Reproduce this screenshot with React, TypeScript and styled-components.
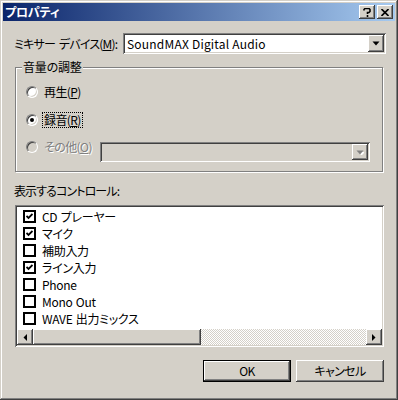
import React from 'react';
import styled, { createGlobalStyle, css } from 'styled-components';

const GlobalStyle = createGlobalStyle`
  html, body {
    margin: 0;
    padding: 0;
    background: #d4d0c8;
  }
  body {
    font-family: "Noto Sans CJK JP", "Liberation Sans", sans-serif;
    font-size: 12px;
    color: #000;
    font-feature-settings: "palt";
    letter-spacing: -0.6px;
  }
`;

const raised = css`
  background: #d4d0c8;
  box-shadow: inset -1px -1px #404040, inset 1px 1px #ffffff, inset -2px -2px #808080, inset 2px 2px #d4d0c8;
`;

const sunken = css`
  box-shadow: inset 1px 1px #808080, inset -1px -1px #ffffff, inset 2px 2px #404040, inset -2px -2px #d4d0c8;
`;

const Window = styled.div`
  width: 398px;
  height: 400px;
  box-sizing: border-box;
  padding: 3px;
  background: #d4d0c8;
  box-shadow: inset -1px -1px #404040, inset 1px 1px #d4d0c8, inset -2px -2px #808080, inset 2px 2px #ffffff;
  display: flex;
  flex-direction: column;
`;

const TitleBar = styled.div`
  height: 18px;
  flex: none;
  display: flex;
  align-items: center;
  padding: 0 2px 0 2px;
  background: linear-gradient(to right, #0a246a, #a6caf0);
`;

const Title = styled.span`
  flex: 1;
  color: #fff;
  font-weight: bold;
  font-size: 12px;
  line-height: 18px;
  letter-spacing: -0.2px;
`;

const CaptionButton = styled.div<{ $gap?: number }>`
  ${raised};
  width: 16px;
  height: 14px;
  margin-left: ${p => p.$gap ?? 0}px;
  display: flex;
  align-items: center;
  justify-content: center;
`;

const Body = styled.div`
  flex: 1;
  display: flex;
  flex-direction: column;
  padding: 12px 9px 0 11px;
`;

const Row = styled.div`
  display: flex;
  align-items: center;
  height: 21px;
`;

const FieldLabel = styled.span`
  width: 109px;
  flex: none;
  line-height: 14px;
  white-space: nowrap;
  letter-spacing: -0.8px;
  word-spacing: 2px;
`;

const Combo = styled.div<{ $width: number; $height: number; $disabled?: boolean }>`
  ${sunken};
  position: relative;
  box-sizing: border-box;
  width: ${p => p.$width}px;
  height: ${p => p.$height}px;
  background: ${p => (p.$disabled ? '#d4d0c8' : '#fff')};
  display: flex;
  align-items: center;
  padding: 2px;
`;

const ComboText = styled.span`
  flex: 1;
  padding-left: 2px;
  line-height: 14px;
  letter-spacing: 0.2px;
`;

const DropButton = styled.div`
  ${raised};
  width: 16px;
  height: 100%;
  display: flex;
  align-items: center;
  justify-content: center;
`;

const Mnemonic = styled.span`
  text-decoration: underline;
  text-underline-offset: 1px;
`;

const GroupBox = styled.div`
  position: relative;
  box-sizing: border-box;
  margin: 13px 0 0 1px;
  width: 368px;
  height: 105px;
  border: 1px solid #808080;
  box-shadow: inset 1px 1px #fff, 1px 1px #fff;
  padding: 17px 0 0 10px;
  display: flex;
  flex-direction: column;
`;

const Legend = styled.span`
  position: absolute;
  top: -8px;
  left: 6px;
  padding: 0 1px;
  line-height: 14px;
  letter-spacing: -0.2px;
  background: #d4d0c8;
`;

const RadioRow = styled.div<{ $top: number }>`
  display: flex;
  align-items: flex-start;
  margin-top: ${p => p.$top}px;
`;

const RadioItem = styled.div<{ $width?: number }>`
  display: flex;
  align-items: center;
  height: 14px;
  width: ${p => (p.$width ? `${p.$width}px` : 'auto')};
  flex: none;
`;

const RadioCircle = styled.span<{ $disabled?: boolean }>`
  position: relative;
  box-sizing: border-box;
  width: 12px;
  height: 12px;
  border-radius: 50%;
  border: 1px solid;
  border-color: #808080 #fff #fff #808080;
  background: ${p => (p.$disabled ? '#d4d0c8' : '#fff')};
  box-shadow: inset 1px 1px #404040, inset -1px -1px #d4d0c8;
  margin-right: 6px;
  flex: none;
`;

const RadioDot = styled.span`
  position: absolute;
  left: 3px;
  top: 3px;
  width: 4px;
  height: 4px;
  border-radius: 50%;
  background: #000;
`;

const RadioLabel = styled.span<{ $disabled?: boolean; $focused?: boolean }>`
  line-height: 14px;
  padding: 0 1px;
  white-space: nowrap;
  color: ${p => (p.$disabled ? '#808080' : '#000')};
  text-shadow: ${p => (p.$disabled ? '1px 1px #fff' : 'none')};
  outline: ${p => (p.$focused ? '1px dotted #000' : 'none')};
  margin-left: -1px;
`;

const SectionLabel = styled.div`
  margin-top: 12px;
  line-height: 14px;
  letter-spacing: -0.9px;
`;

const ListBox = styled.div`
  ${sunken};
  box-sizing: border-box;
  margin: 7px 0 0 1px;
  width: 369px;
  height: 142px;
  background: #fff;
  padding: 2px;
  display: flex;
  flex-direction: column;
`;

const Items = styled.div`
  flex: 1;
  padding: 1px 0 0 6px;
`;

const Item = styled.div`
  display: flex;
  align-items: center;
  height: 17px;
`;

const CheckBox = styled.span`
  box-sizing: border-box;
  width: 13px;
  height: 13px;
  border: 2px solid #000;
  margin-right: 6px;
  display: flex;
  align-items: center;
  justify-content: center;
  flex: none;
`;

const ItemText = styled.span`
  line-height: 14px;
  letter-spacing: -0.3px;
  word-spacing: 1px;
`;

const HScroll = styled.div`
  display: flex;
  height: 16px;
  flex: none;
`;

const ScrollButton = styled.div`
  ${raised};
  width: 16px;
  height: 16px;
  display: flex;
  align-items: center;
  justify-content: center;
`;

const Thumb = styled.div`
  ${raised};
  width: 168px;
  height: 16px;
`;

const Track = styled.div`
  flex: 1;
  background: repeating-conic-gradient(#fff 0 25%, #d4d0c8 0 50%) 0 0 / 2px 2px;
`;

const ButtonRow = styled.div`
  display: flex;
  justify-content: flex-end;
  gap: 5px;
  margin: 13px 2px 0 0;
`;

const PushButton = styled.div<{ $default?: boolean }>`
  ${raised};
  box-sizing: border-box;
  width: 88px;
  height: 22px;
  display: flex;
  align-items: center;
  justify-content: center;
  line-height: 14px;
  ${p =>
    p.$default &&
    css`
      box-shadow: inset 0 0 0 1px #000, inset -2px -2px #404040, inset 2px 2px #ffffff, inset -3px -3px #808080;
    `}
`;

const DownArrow = ({ color = '#000', shadow = false }: { color?: string; shadow?: boolean }) => (
  <svg width="8" height="5" viewBox="0 0 8 5">
    {shadow && <path d="M2 2h7l-3.5 3.5z" fill="#fff" />}
    <path d="M0.5 0.5h7L4 4.5z" fill={color} />
  </svg>
);

const items: { label: string; checked: boolean }[] = [
  { label: 'CD プレーヤー', checked: true },
  { label: 'マイク', checked: true },
  { label: '補助入力', checked: false },
  { label: 'ライン入力', checked: true },
  { label: 'Phone', checked: false },
  { label: 'Mono Out', checked: false },
  { label: 'WAVE 出力ミックス', checked: false },
];

export default function App() {
  return (
    <>
      <GlobalStyle />
      <Window>
        <TitleBar>
          <Title>プロパティ</Title>
          <CaptionButton>
            <svg width="8" height="9" viewBox="0 0 8 9">
              <path d="M1 2.5V1.5L2 0.5h4l1 1v2l-1 1H4.5v1.5M4.5 7v2" stroke="#000" strokeWidth="1.6" fill="none" />
            </svg>
          </CaptionButton>
          <CaptionButton $gap={2}>
            <svg width="8" height="7" viewBox="0 0 8 7">
              <path d="M0.5 0L7.5 7M7.5 0L0.5 7" stroke="#000" strokeWidth="1.6" />
            </svg>
          </CaptionButton>
        </TitleBar>
        <Body>
          <Row>
            <FieldLabel>
              ミキサー デバイス(<Mnemonic>M</Mnemonic>):
            </FieldLabel>
            <Combo $width={263} $height={21}>
              <ComboText>SoundMAX Digital Audio</ComboText>
              <DropButton>
                <DownArrow />
              </DropButton>
            </Combo>
          </Row>

          <GroupBox>
            <Legend>音量の調整</Legend>
            <RadioRow $top={0}>
              <RadioItem>
                <RadioCircle />
                <RadioLabel>
                  再生(<Mnemonic>P</Mnemonic>)
                </RadioLabel>
              </RadioItem>
            </RadioRow>
            <RadioRow $top={14}>
              <RadioItem>
                <RadioCircle>
                  <RadioDot />
                </RadioCircle>
                <RadioLabel $focused>
                  録音(<Mnemonic>R</Mnemonic>)
                </RadioLabel>
              </RadioItem>
            </RadioRow>
            <RadioRow $top={13}>
              <RadioItem $width={74}>
                <RadioCircle $disabled />
                <RadioLabel $disabled>
                  その他(<Mnemonic>O</Mnemonic>)
                </RadioLabel>
              </RadioItem>
              <Combo $width={270} $height={20} $disabled style={{ marginTop: 2 }}>
                <ComboText />
                <DropButton>
                  <DownArrow color="#808080" shadow />
                </DropButton>
              </Combo>
            </RadioRow>
          </GroupBox>

          <SectionLabel>表示するコントロール:</SectionLabel>
          <ListBox>
            <Items>
              {items.map(it => (
                <Item key={it.label}>
                  <CheckBox>
                    {it.checked && (
                      <svg width="7" height="7" viewBox="0 0 7 7">
                        <path d="M0.5 3L2.5 5L6.5 1" stroke="#000" strokeWidth="1.8" fill="none" />
                      </svg>
                    )}
                  </CheckBox>
                  <ItemText>{it.label}</ItemText>
                </Item>
              ))}
            </Items>
            <HScroll>
              <ScrollButton>
                <svg width="4" height="7" viewBox="0 0 4 7">
                  <path d="M4 0v7L0.5 3.5z" fill="#000" />
                </svg>
              </ScrollButton>
              <Thumb />
              <Track />
              <ScrollButton>
                <svg width="4" height="7" viewBox="0 0 4 7">
                  <path d="M0 0v7L3.5 3.5z" fill="#000" />
                </svg>
              </ScrollButton>
            </HScroll>
          </ListBox>

          <ButtonRow>
            <PushButton $default>OK</PushButton>
            <PushButton>キャンセル</PushButton>
          </ButtonRow>
        </Body>
      </Window>
    </>
  );
}
